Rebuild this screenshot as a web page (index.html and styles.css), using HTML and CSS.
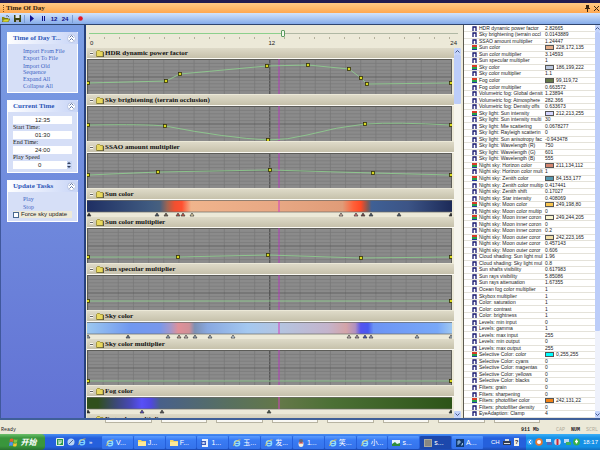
FILE: index.html
```html
<!DOCTYPE html>
<html lang="en">
<head>
  <meta charset="UTF-8" />
  <meta name="viewport" content="width=device-width, initial-scale=1.0" />
  <title>Time Of Day</title>
  <link rel="stylesheet" href="styles.css">
</head>
<body>
  <header class="titlebar">
    <span class="grip"></span>
    <h1>Time Of Day</h1>
    <button class="title-btn" aria-label="Pin"><svg width="5" height="7" viewBox="0 0 5 7"><path d="M1 0h3v3h1v1H3v3H2V4H0V3h1z" fill="#3a2410"/></svg></button>
    <button class="title-btn" aria-label="Close"><svg width="5" height="5" viewBox="0 0 5 5"><path d="M0 0l5 5M5 0L0 5" stroke="#3a2410"/></svg></button>
  </header>

  <div class="toolbar">
    <button aria-label="Open"><svg width="8" height="7" viewBox="0 0 8 7"><path d="M0 6V2h2l1 1h3v1H2z" fill="#8a8a10"/><path d="M0 7l2-3h6L6 7z" fill="#d8d830" stroke="#444400" stroke-width=".5"/><path d="M4 1q2-1 3 1" stroke="#222" stroke-width=".6" fill="none"/></svg></button>
    <button aria-label="Save"><svg width="7" height="7" viewBox="0 0 7 7"><path d="M0 0h7v7H0z" fill="#3c4410"/><path d="M1.500 0h4v3h-4z" fill="#dfe4ec"/><path d="M2 5h3v2H2z" fill="#aab"/></svg></button>
    <span class="sep"></span>
    <button aria-label="Play"><svg width="4" height="7" viewBox="0 0 4 7"><path d="M0 0l4 3.500L0 7z" fill="#10108c"/></svg></button>
    <button aria-label="Pause"><svg width="3" height="5" viewBox="0 0 3 5"><path d="M0 0h1v5H0zM2 0h1v5H2z" fill="#10108c"/></svg></button>
    <button>12</button>
    <button>24</button>
    <span class="sep"></span>
    <button aria-label="Record"><svg width="5" height="5" viewBox="0 0 5 5"><circle cx="2.500" cy="2.500" r="2.300" fill="#e0182c"/></svg></button>
  </div>

  <main class="workspace">
    <aside class="sidebar">
      <section class="panel">
        <h2>Time of Day T... <button class="fold" aria-label="Collapse"><svg width="5" height="6" viewBox="0 0 5 6"><path d="M.5 2.500l2-2 2 2M.5 5.500l2-2 2 2" stroke="#33518f" fill="none" stroke-width=".8"/></svg></button></h2>
        <nav class="links links-main">
          <a href="#">Import From File</a>
          <a href="#">Export To File</a>
          <a href="#">Import Old<br>Sequence</a>
          <a href="#">Expand All</a>
          <a href="#">Collapse All</a>
        </nav>
      </section>
      <section class="panel">
        <h2>Current Time <button class="fold" aria-label="Collapse"><svg width="5" height="6" viewBox="0 0 5 6"><path d="M.5 2.500l2-2 2 2M.5 5.500l2-2 2 2" stroke="#33518f" fill="none" stroke-width=".8"/></svg></button></h2>
        <div class="fields">
          <input type="text" value="12:35" aria-label="Current Time">
          <label for="startTime">Start Time:</label>
          <input type="text" id="startTime" value="01:30">
          <label for="endTime">End Time:</label>
          <input type="text" id="endTime" value="24:00">
          <label for="speed">Play Speed</label>
          <div class="spinner">
            <input type="text" id="speed" value="0">
            <span><button aria-label="Faster"></button><button class="down" aria-label="Slower"></button></span>
          </div>
        </div>
      </section>
      <section class="panel">
        <h2>Update Tasks <button class="fold" aria-label="Collapse"><svg width="5" height="6" viewBox="0 0 5 6"><path d="M.5 2.500l2-2 2 2M.5 5.500l2-2 2 2" stroke="#33518f" fill="none" stroke-width=".8"/></svg></button></h2>
        <nav class="links links-update">
          <a href="#">Play</a>
          <a href="#">Stop</a>
        </nav>
        <label class="check"><input type="checkbox"> Force sky update</label>
      </section>
    </aside>

    <section class="curves">
      <div class="timeline">
        <input type="range" min="0" max="24" step="0.01" value="12.65" aria-label="Time">
        <div class="ticks"></div>
        <div class="scale"><span>0</span><span>12</span><span>24</span></div>
      </div>
      <div class="tracks-wrap">
        <div class="tracks" id="tracks"></div>
        <div class="scrollbar">
          <button aria-label="Scroll up"><svg width="5" height="3" viewBox="0 0 5 3"><path d="M.5 2.500l2-2 2 2" stroke="#44598c" fill="none"/></svg></button>
          <div class="thumb"></div>
          <button class="last" aria-label="Scroll down"><svg width="5" height="3" viewBox="0 0 5 3"><path d="M.5 .5l2 2 2-2" stroke="#44598c" fill="none"/></svg></button>
        </div>
      </div>
    </section>

    <section class="props">
      <table><tbody id="props"></tbody></table>
      <div class="scrollbar">
        <button aria-label="Scroll up"><svg width="5" height="3" viewBox="0 0 5 3"><path d="M.5 2.500l2-2 2 2" stroke="#44598c" fill="none"/></svg></button>
        <div class="thumb thumb-long"></div>
        <button class="last" aria-label="Scroll down"><svg width="5" height="3" viewBox="0 0 5 3"><path d="M.5 .5l2 2 2-2" stroke="#44598c" fill="none"/></svg></button>
      </div>
    </section>
  </main>

  <div class="dock"><i></i><i></i><i></i><i></i><i></i><i></i><i></i><i></i></div>

  <div class="status">
    <span>Ready</span>
    <b class="mem">911 Mb</b>
    <span class="off">CAP</span><b>NUM</b><span class="off">SCRL</span>
  </div>

  <footer class="taskbar">
    <button class="start"><svg width="9" height="9" viewBox="0 0 9 9"><path d="M1 1q2-1 3.500 0L4 4Q2 3 .5 4z" fill="#e8602c"/><path d="M5 1.300q2 1 3.500 0L8 4.300q-2 1-3.500 0z" fill="#86c440"/><path d="M.5 4.600Q2 3.600 4 4.600L3.500 8Q2 7 0 8z" fill="#5090f0"/><path d="M4.500 5q1.500 1 3.500 0l-.5 3q-2 1-3.500 0z" fill="#f4c830"/></svg>开始</button>
    <div class="quick">
      <svg width="8" height="8" viewBox="0 0 8 8"><rect width="8" height="8" rx="1" fill="#e8f4e8"/><path d="M1 1h6v6H1z" fill="#2c9a48"/><path d="M3 2v3h2V2M3 5v1.500" stroke="#fff" fill="none"/></svg>
      <svg width="8" height="8" viewBox="0 0 8 8"><circle cx="4" cy="4" r="3.500" fill="#b8d4f4"/><path d="M2 6l4-4" stroke="#4a6a9a"/></svg>
      <svg width="8" height="8" viewBox="0 0 8 8"><circle cx="4" cy="4.300" r="2.600" fill="none" stroke="#7cd0ff" stroke-width="1.400"/><path d="M2 4.500h4" stroke="#7cd0ff"/><path d="M.5 7Q2 1 7.500 .8" stroke="#f0c040" fill="none" stroke-width=".7"/></svg>
      <span>»</span>
    </div>
    <div class="tasks" id="tasks"></div>
    <div class="lang">
      <span>CH</span>
      <svg width="8" height="7" viewBox="0 0 8 7"><path d="M0 2h8v4H0z" fill="#333c50"/><path d="M2 0h4v2H2zM1 4h6v1H1z" fill="#d8dce4"/></svg>
      <b>?</b>
    </div>
    <div class="tray">
      <svg width="6" height="8" viewBox="0 0 6 8"><circle cx="3" cy="4" r="3" fill="#4aa8f8"/><path d="M4 2L2 4l2 2" stroke="#fff" fill="none"/></svg>
      <svg width="8" height="8" viewBox="0 0 8 8"><circle cx="4" cy="4" r="3.800" fill="#e87830"/><circle cx="4" cy="4" r="2" fill="#fff"/></svg>
      <svg width="7" height="8" viewBox="0 0 7 8"><path d="M1 1h5v3H1z" fill="#cfe4ff"/><path d="M2 4h5v3H2z" fill="#5468b8"/></svg>
      <svg width="7" height="8" viewBox="0 0 7 8"><circle cx="3.500" cy="4" r="3.300" fill="#d4d8e8"/><path d="M3.500 1v6" stroke="#c82838" stroke-width="2"/></svg>
      <svg width="8" height="8" viewBox="0 0 8 8"><path d="M1 1h5v4H1z" fill="#bcd8f4"/><path d="M3 4h5v3H3z" fill="#3cb060"/></svg>
      <svg width="7" height="8" viewBox="0 0 7 8"><circle cx="3.500" cy="4" r="3.400" fill="#38b048"/><path d="M3.500 1.500v4M2 3.500h3" stroke="#fff" stroke-width="1.300"/></svg>
      <time>18:17</time>
    </div>
  </footer>

  <script src="script.js"></script>
</body>
</html>
```
FILE: styles.css
```css
:root {
  --face: #ece9d8;
  --navy: #26407c;
  --link: #3f66c4;
  --serif: "Liberation Serif", "Noto Sans CJK SC", serif;
  --sans: "Liberation Sans", "Noto Sans CJK SC", sans-serif;
  --mono: "Liberation Mono", monospace;
}
* {
  box-sizing: border-box;
}
body {
  margin: 0;
  height: 100vh;
  display: flex;
  flex-direction: column;
  overflow: hidden;
  background: var(--face);
  color: #222;
  font: 6px/6px var(--serif);
}
button, input {
  font: inherit;
  color: inherit;
  margin: 0;
  padding: 0;
  border: 0;
  background: none;
}
button {
  display: flex;
  align-items: center;
  justify-content: center;
}
svg {
  display: block;
}
h1, h2, h3 {
  margin: 0;
  font: bold 7px/10px var(--serif);
}

/* title and toolbar */
.titlebar {
  flex: none;
  height: 13px;
  display: flex;
  align-items: center;
  gap: 4px;
  padding: 0 1px 0 3px;
  border-top: 3px solid #221c50;
  background: linear-gradient(#ffca84, #ffa850);
}
.titlebar h1 {
  flex: 1;
  color: #33200a;
}
.grip {
  width: 1px;
  height: 7px;
  margin-right: -2px;
  border-left: 1px dotted #7a5020;
}
.toolbar {
  flex: none;
  height: 12px;
  display: flex;
  align-items: center;
  gap: 3px;
  padding-left: 2px;
  border-bottom: 1px solid #30456e;
  background: linear-gradient(#d3e4fc, #86acea);
  color: #10108c;
  font: bold 6px/8px var(--sans);
}
.toolbar button {
  width: 8px;
  height: 9px;
}
.toolbar .sep {
  width: 1px;
  height: 8px;
  background: #7a9cd4;
}

.workspace {
  flex: 1;
  min-height: 0;
  display: flex;
  border-bottom: 2px solid #3f5f98;
}

/* task panels */
.sidebar {
  flex: none;
  width: 86px;
  padding: 7px 6px;
  display: flex;
  flex-direction: column;
  gap: 7px;
  border-left: 1px solid #40589c;
  border-right: 2px solid var(--navy);
  background: linear-gradient(#7b9ee4, #6272d4);
}
.panel {
  padding: 0 5px 3px;
  border: 1px solid #fff;
  border-top: 0;
  background: #d6dff7;
}
.panel h2 {
  display: flex;
  justify-content: space-between;
  align-items: center;
  height: 12px;
  margin: 0 -6px;
  padding: 0 2px 0 6px;
  border-radius: 2px 2px 0 0;
  background: linear-gradient(90deg, #fff, #c8d5f7);
  color: #2d57b8;
}
.fold {
  width: 9px;
  height: 9px;
  border: 1px solid #b4c2e4;
  border-radius: 50%;
  background: #fff;
}
.links {
  display: flex;
  flex-direction: column;
  justify-content: space-between;
  align-items: flex-start;
  padding-left: 10px;
}
.links a {
  color: var(--link);
  text-decoration: none;
}
.links-main {
  min-height: 45px;
  padding-top: 4px;
}
.links-update {
  min-height: 18px;
  padding-top: 4px;
}
.fields {
  display: flex;
  flex-direction: column;
  padding-top: 4px;
}
.fields input {
  width: 100%;
  height: 8px;
  background: #fff;
  text-align: center;
  font: 6px/8px var(--sans);
}
.fields label {
  height: 7px;
  line-height: 7px;
}
.spinner {
  display: flex;
  background: #fff;
}
.spinner span {
  display: grid;
  width: 6px;
}
.spinner button {
  background: #c8d6f4;
}
.spinner button::before {
  content: "";
  border: 2px solid transparent;
  border-top: 0;
  border-bottom: 2px solid #33415e;
}
.spinner .down::before {
  border-bottom: 0;
  border-top: 2px solid #33415e;
}
.check {
  display: flex;
  align-items: center;
  gap: 2px;
  margin-top: 1px;
  background: var(--face);
  font: 6px/7px var(--sans);
  white-space: nowrap;
}
.check input {
  appearance: none;
  width: 6px;
  height: 6px;
  border: 1px solid #4a6a90;
  background: #fff;
}

/* curve editor */
.curves {
  flex: 1;
  min-width: 0;
  display: flex;
  flex-direction: column;
  padding: 0 2px 0 1px;
}
.timeline {
  flex: none;
  height: 23px;
  padding: 4px 3px 0 2px;
}
.timeline input {
  display: block;
  appearance: none;
  width: 100%;
  height: 8px;
  background: linear-gradient(#8cd08c, #8cd08c) 0 4px / 52% 1px no-repeat, linear-gradient(#b0b8a4, #b0b8a4) 0 4px / 100% 1px no-repeat;
}
.timeline input::-webkit-slider-thumb {
  appearance: none;
  width: 4px;
  height: 7px;
  border: 1px solid #5c9a60;
  border-radius: 1px;
  background: #f4f8ee;
}
.ticks {
  height: 2px;
  background: repeating-linear-gradient(90deg, #b4b09c 0 1px, transparent 1px 15px);
}
.scale {
  display: flex;
  justify-content: space-between;
  padding: 1px 1px 0;
  font: 6px/6px var(--sans);
}
.tracks-wrap {
  flex: 1;
  min-height: 0;
  display: flex;
}
.tracks {
  flex: 1;
  min-width: 0;
  overflow: hidden;
}
.track h3 {
  display: flex;
  align-items: center;
  height: 10px;
  margin-bottom: 1px;
  padding-left: 2px;
  background: linear-gradient(#dedac8, #c6c1ab);
  color: #111;
  box-shadow: 0 1px #fbfaf4;
}
.track h3 svg {
  margin-right: 1px;
}
.tree {
  width: 5px;
  height: 5px;
  margin-right: 2px;
  border: 1px solid #d4cfba;
  background: linear-gradient(#666, #666) center / 3px 1px no-repeat #f8f6ec;
}
.graph {
  height: 36px;
  padding: 0 2px 1px 0;
}
.ramp {
  height: 17px;
  padding-right: 2px;
}
.track svg.plot {
  width: 100%;
  height: 100%;
}
.scrollbar {
  flex: none;
  width: 7px;
  display: flex;
  flex-direction: column;
  background: #f6f5ee;
}
.scrollbar button {
  height: 7px;
  border-radius: 1px;
  background: #c3d3fb;
}
.scrollbar .last {
  margin-top: auto;
}
.thumb {
  height: 49px;
  border-radius: 1px;
  background: #bccdf9;
}
.thumb-long {
  flex: 1;
  max-height: 76%;
}

/* property list */
.props {
  flex: none;
  width: 137px;
  display: flex;
  border-left: 1px solid #5c5a50;
  background: #fff;
}
.props table {
  flex: 1;
  width: 131px;
  height: 100%;
  table-layout: fixed;
  border-collapse: collapse;
  font: 5px/5px var(--sans);
}
.props .scrollbar {
  width: 5px;
  background: #eef1fb;
}
.props th, .props td {
  height: 6px;
  padding: 0;
  border-bottom: 1px solid #e4e2da;
  white-space: nowrap;
  font-weight: normal;
  text-align: left;
}
.props .icon {
  width: 15px;
  padding-left: 8px;
}
.props .icon svg {
  width: 5px;
}
.props th {
  width: 65px;
}
.props td.value {
  padding-left: 1px;
}
.swatch {
  display: inline-block;
  width: 9px;
  height: 5px;
  margin-right: 2px;
  border: 1px solid #555;
  vertical-align: top;
}

/* strip of docked toolbars and status line */
.dock {
  flex: none;
  height: 4px;
  display: flex;
  gap: 9px;
  padding: 0 60px 0 105px;
}
.dock i {
  flex: 1;
  height: 3px;
  border: 1px solid #b8b4a2;
  border-top: 0;
  background: #faf9f4;
}
.status {
  flex: none;
  height: 10px;
  display: flex;
  align-items: center;
  gap: 6px;
  padding: 2px 2px 0 1px;
  font: 5px/6px var(--mono);
}
.status .mem {
  margin-left: auto;
  margin-right: 11px;
}
.status .off {
  color: #b0ac9c;
}

/* windows taskbar */
.taskbar {
  flex: none;
  height: 16px;
  display: flex;
  color: #fff;
  font: 6px/8px var(--sans);
  background: linear-gradient(#4a90f4, #2560dc 25%, #2560dc 80%, #1b48b0);
}
.start {
  width: 45px;
  gap: 3px;
  border-radius: 0 4px 4px 0;
  background: linear-gradient(#6cc06c, #3a963c 25%, #3a963c 75%, #2a7030);
  font: italic bold 8px/12px "Noto Sans CJK SC", sans-serif;
}
.quick {
  width: 57px;
  display: flex;
  align-items: center;
  gap: 3px;
  padding-left: 11px;
}
.tasks {
  flex: 1;
  min-width: 0;
  display: flex;
  gap: 1px;
  padding: 2px 0 1px;
}
.tasks button {
  flex: 1;
  min-width: 0;
  justify-content: flex-start;
  gap: 2px;
  padding-left: 4px;
  border-radius: 1px;
  background: linear-gradient(#5a9cff, #3a7cf4 30%, #3472ea);
  font: 7px/9px var(--sans);
  white-space: nowrap;
}
.tasks button.active {
  background: #1c48ac;
}
.tasks svg {
  flex: none;
}
.lang {
  width: 43px;
  display: flex;
  align-items: center;
  gap: 3px;
  padding-left: 8px;
}
.lang b {
  padding: 0 1px;
  background: #f0f0e8;
  color: #223;
}
.tray {
  width: 74px;
  display: flex;
  align-items: center;
  gap: 2px;
  padding-left: 1px;
  background: linear-gradient(#3cb0f8, #1590e6 25%, #1590e6 80%, #1070c0);
}
.tray time {
  margin-left: 1px;
}
```
FILE: script.js
```js
// points and markers are in track units: 365 wide, graph 35 high
const tracks = [
  { name: 'HDR dynamic power factor', points: [[1, 24], [79, 22], [93, 15], [180, 7], [221, 6], [262, 10], [274, 19], [280, 25], [364, 24]] },
  { name: 'Sky brightening (terrain occlusion)', points: [[1, 19], [78, 20], [181, 34], [278, 18], [364, 19]],
    path: 'M1 19Q60 18 78 20Q140 32 181 34Q200 34 220 29Q250 21 278 18Q310 16 364 19' },
  { name: 'SSAO amount multiplier', points: [[1, 22], [71, 19], [183, 17], [286, 20], [364, 22]] },
  { name: 'Sun color',
    stops: [[0, '#1f2f63'], [17, '#3f5a80'], [20, '#47607f'], [22, '#a06450'], [24, '#f05030'], [26, '#ff5030'], [28.5, '#f0b48c'], [52, '#e8a884'], [70, '#e09c78'], [73, '#ff6038'], [75, '#ff4a25'], [77, '#7a5a58'], [78, '#3f6095'], [88, '#3c5486'], [100, '#1c2a58']],
    markers: [[2, '#222'], [70, '#456'], [79, '#765'], [91, '#b54'], [96, '#c54'], [105, '#eda'], [254, '#dba'], [269, '#d77'], [276, '#744'], [284, '#456'], [312, '#456'], [364, '#222']] },
  { name: 'Sun color multiplier', points: [[1, 29], [91, 29], [181, 27], [274, 30], [364, 29]] },
  { name: 'Sun specular multiplier', points: [[1, 26], [364, 26]] },
  { name: 'Sky color',
    stops: [[0, '#9cc8f0'], [12, '#7098f0'], [20, '#7898ec'], [23, '#a898c8'], [25, '#e09098'], [28, '#d09098'], [29.5, '#7c90b4'], [33, '#88a8e0'], [44, '#a4c8f0'], [53, '#b4c4e0'], [66, '#c4b4cc'], [71, '#d4a4a8'], [73.5, '#b090c0'], [75, '#5454f0'], [77, '#4858f0'], [78.5, '#6c94f4'], [96, '#78a8f8'], [100, '#a0c8f0']],
    markers: [[1, '#9ab'], [41, '#678'], [81, '#9ab'], [92, '#ca9'], [99, '#cbb'], [108, '#9ab'], [123, '#abc'], [146, '#cde'], [262, '#cbb'], [270, '#a9a'], [278, '#45c'], [284, '#99b'], [330, '#abc'], [364, '#abc']] },
  { name: 'Sky color multiplier', points: [[1, 31], [364, 31]] },
  { name: 'Fog color',
    stops: [[0, '#30501c'], [3, '#30501c'], [8, '#3c4878'], [12, '#4848b8'], [15, '#5850f8'], [17.5, '#5048e0'], [20, '#48608a'], [39, '#58705f'], [53, '#647848'], [67, '#4c7035'], [100, '#2c5418']],
    markers: [[1, '#222'], [55, '#54c'], [75, '#555'], [182, '#454'], [364, '#232']] },
  { name: 'Fog color multiplier', points: [[1, 24], [364, 24]] }
];

const folder = '<svg width="8" height="7" viewBox="0 0 8 7"><path d="M.5 1.500l1-1h2l1 1h2.500v5H.5z" fill="#e8d860" stroke="#8a7c20" stroke-width=".7"/><path d="M7.500 2v5H1" stroke="#333" stroke-width=".7" fill="none"/></svg>';

function drawGraph(t) {
  let lines = '';
  for (let i = 0; i <= 24; i++) {
    const x = 1 + i * 15.15;
    lines += `<path d="M${x} 0V35" stroke="${i === 12 ? '#444' : '#777'}" stroke-width="${i === 12 ? 1 : 0.7}"/>`;
  }
  for (let i = 1; i < 10; i++) {
    lines += `<path d="M0 ${1 + i * 3.4}H365" stroke="${i === 5 ? '#555' : '#797979'}" stroke-width="0.7"/>`;
  }
  const d = t.path || 'M' + t.points.map(p => p.join(' ')).join('L');
  const dots = t.points.map(p => `<rect x="${p[0] - 1.5}" y="${p[1] - 1.5}" width="3" height="3" fill="#d8d820" stroke="#33330a" stroke-width=".8"/>`).join('');
  return `<div class="graph"><svg class="plot" viewBox="0 0 365 35" preserveAspectRatio="none">
    <rect width="365" height="35" fill="#8b8b8b"/>${lines}
    <path d="M0 35V.5H365" fill="none" stroke="#5c5c58"/><path d="M.5 0V35M364.5 0V35" stroke="#5c5c58"/>
    <path d="M192 0V35" stroke="#b23cb8"/>
    <path d="${d}" fill="none" stroke="#8fd48f" stroke-width=".8"/>${dots}</svg></div>`;
}

function drawRamp(t, n) {
  const stops = t.stops.map(s => `<stop offset="${s[0]}%" stop-color="${s[1]}"/>`).join('');
  const marks = t.markers.map(m => `<path d="M${m[0] - 2} 16h4l-2 -3z" fill="${m[1]}" stroke="#3c3c3c" stroke-width=".7"/>`).join('');
  return `<div class="ramp"><svg class="plot" viewBox="0 0 365 17" preserveAspectRatio="none">
    <defs><linearGradient id="ramp${n}">${stops}</linearGradient></defs>
    <rect width="365" height="12" fill="url(#ramp${n})"/><path d="M0 .5H365M0 12H365" stroke="#6c6a64" stroke-width=".7"/>
    <path d="M192 0V12" stroke="#d040c0"/>${marks}</svg></div>`;
}

document.getElementById('tracks').innerHTML = tracks.map((t, n) =>
  `<div class="track"><h3><button class="tree" aria-label="Collapse"></button>${folder}${t.name}</h3>${t.stops ? drawRamp(t, n) : drawGraph(t)}</div>`
).join('');

const props = `HDR dynamic power factor|2.82665
Sky brightening (terrain occl|0.0143889
SSAO amount multiplier|1.24447
Sun color|228,172,135
Sun color multiplier|3.14593
Sun specular multiplier|1
Sky color|186,199,222
Sky color multiplier|1.1
Fog color|99,119,72
Fog color multiplier|0.663572
Volumetric fog: Global densit|1.23894
Volumetric fog: Atmosphere|282.366
Volumetric fog: Density offs|0.633673
Sky light: Sun intensity|212,213,255
Sky light: Sun intensity multi|30
Sky light: Mie scattering|0.0678277
Sky light: Rayleigh scatterin|0
Sky light: Sun anisotropy fac|-0.943478
Sky light: Wavelength (R)|750
Sky light: Wavelength (G)|601
Sky light: Wavelength (B)|555
Night sky: Horizon color|211,134,112
Night sky: Horizon color mult|1
Night sky: Zenith color|84,153,177
Night sky: Zenith color multip|0.417441
Night sky: Zenith shift|0.17027
Night sky: Star intensity|0.408069
Night sky: Moon color|249,198,80
Night sky: Moon color multip|0
Night sky: Moon inner coron|249,244,205
Night sky: Moon inner coron|0
Night sky: Moon inner coron|0.2
Night sky: Moon outer coror|242,223,165
Night sky: Moon outer coror|0.457143
Night sky: Moon outer coror|0.606
Cloud shading: Sun light mul|1.96
Cloud shading: Sky light mul|0.8
Sun shafts visibility|0.617983
Sun rays visibility|5.85086
Sun rays attenuation|1.67355
Ocean fog color multiplier|1
Skybox multiplier|1
Color: saturation|1
Color: contrast|1
Color: brightness|1
Levels: min input|0
Levels: gamma|1
Levels: max input|255
Levels: min output|0
Levels: max output|255
Selective Color: color|0,255,255
Selective Color: cyans|0
Selective Color: magentas|0
Selective Color: yellows|0
Selective Color: blacks|0
Filters: grain|0
Filters: sharpening|0
Filters: photofilter color|242,131,22
Filters: photofilter density|0
EyeAdaption: Clamp|4`;

const numIcon = '<svg width="5" height="5" viewBox="0 0 5 5"><path d="M1 5V1h3v4" stroke="#16166e" stroke-width="1.300" fill="none"/></svg>';
const rgbIcon = '<svg width="5" height="5" viewBox="0 0 5 5"><path d="M0 0h5v2H0z" fill="#d83c28"/><path d="M0 2h5v2H0z" fill="#28a048"/><path d="M0 4h5v1H0z" fill="#2038a0"/></svg>';

document.getElementById('props').innerHTML = props.split('\n').map(row => {
  const [name, value] = row.split('|');
  const isColor = value.includes(',');
  const swatch = isColor ? `<span class="swatch" style="background: rgb(${value})"></span>` : '';
  return `<tr><td class="icon">${isColor ? rgbIcon : numIcon}</td><th scope="row">${name}</th><td class="value">${swatch}${value}</td></tr>`;
}).join('');

const icons = {
  ie: '<circle cx="4" cy="4.300" r="2.600" fill="none" stroke="#8cdcff" stroke-width="1.400"/><path d="M2 4.500h4" stroke="#8cdcff"/><path d="M.5 7Q2 1 7.500 .8" stroke="#f0c040" fill="none" stroke-width=".8"/>',
  folder: '<path d="M0 1h3l1 1h4v5H0z" fill="#f4d868"/><path d="M0 3h8v4H0z" fill="#fbe89a"/>',
  word: '<path d="M1 0h6v8H1z" fill="#e8eefc"/><path d="M0 2h5v4H0z" fill="#3858b8"/><path d="M1 3l1 2 .5-2 .5 2 1-2" stroke="#fff" fill="none" stroke-width=".6"/>',
  qq: '<ellipse cx="4" cy="5" rx="2.500" ry="3" fill="#f4f0e0"/><circle cx="4" cy="2" r="2" fill="#667"/><path d="M2 4h4" stroke="#d83030"/>',
  image: '<path d="M0 1h8v6H0z" fill="#e4f4ff"/><path d="M0 7V5l3-2 2 2 3-1v3z" fill="#2c8c3c"/>',
  app: '<path d="M0 0h8v8H0z" fill="#a8a8a0"/><path d="M1 2h6M1 4h6M1 6h6" stroke="#555" stroke-width=".8"/>',
  ps: '<path d="M0 0h8v8H0z" fill="#123a70"/><path d="M2 6V2h2v2H2M5 6h1.500V4" stroke="#b4dcff" fill="none" stroke-width=".8"/>'
};

const tasks = [['ie', 'V...'], ['folder', 'J...'], ['folder', 'F...'], ['word', '1...'], ['ie', '玉...'], ['ie', '发...'], ['qq', '1...'], ['ie', '笑...'], ['ie', '小...'], ['image', 's...'], ['app', 's...', 'active'], ['ps', 'A...']];

document.getElementById('tasks').innerHTML = tasks.map(([icon, label, cls]) =>
  `<button class="${cls || ''}"><svg width="8" height="8" viewBox="0 0 8 8">${icons[icon]}</svg>${label}</button>`
).join('');
```
